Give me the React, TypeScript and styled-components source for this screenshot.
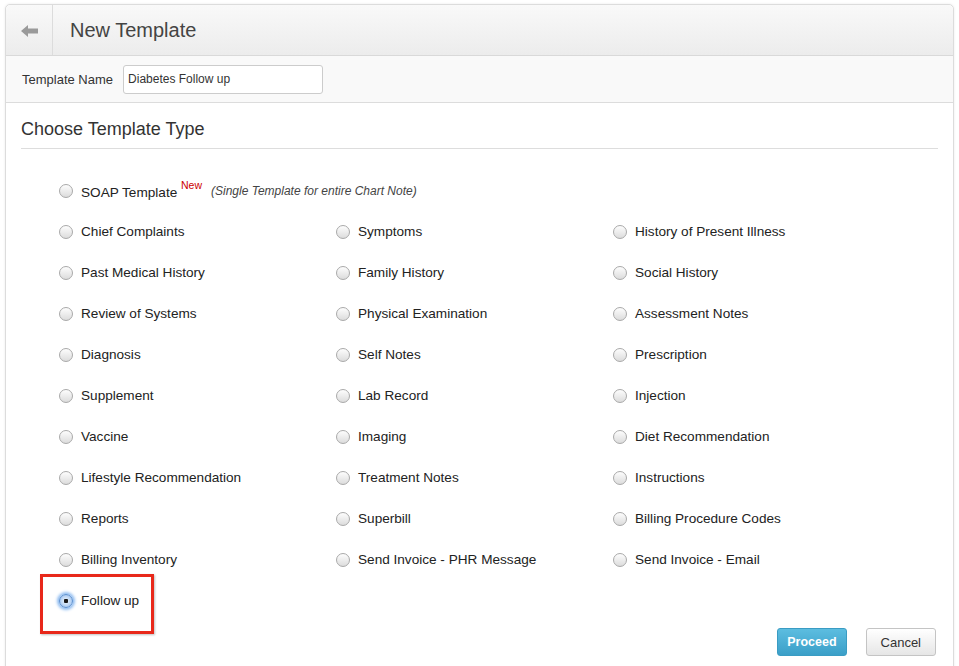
import styled, { createGlobalStyle, css } from "styled-components";

const GlobalStyle = createGlobalStyle`
  html, body {
    margin: 0;
    padding: 0;
    background: #fff;
    font-family: "Liberation Sans", Arial, sans-serif;
    color: #333;
  }
`;

const columns: string[][] = [
  ["Chief Complaints", "Symptoms", "History of Present Illness"],
  ["Past Medical History", "Family History", "Social History"],
  ["Review of Systems", "Physical Examination", "Assessment Notes"],
  ["Diagnosis", "Self Notes", "Prescription"],
  ["Supplement", "Lab Record", "Injection"],
  ["Vaccine", "Imaging", "Diet Recommendation"],
  ["Lifestyle Recommendation", "Treatment Notes", "Instructions"],
  ["Reports", "Superbill", "Billing Procedure Codes"],
  ["Billing Inventory", "Send Invoice - PHR Message", "Send Invoice - Email"],
];

const BackArrow = () => (
  <svg width="18" height="12" viewBox="0 0 18 12">
    <polygon points="0,6 7,0 7,3.5 17,3.5 17,8.5 7,8.5 7,12" fill="#9a9a9a" />
  </svg>
);

const App = () => {
  return (
    <>
      <GlobalStyle />
      <Panel>
        <Header>
          <BackButton>
            <BackArrow />
          </BackButton>
          <Title>New Template</Title>
        </Header>

        <NameRow>
          <Label>Template Name</Label>
          <NameInput defaultValue="Diabetes Follow up" />
        </NameRow>

        <Body>
          <SectionTitle>Choose Template Type</SectionTitle>

          <TypeGrid>
            <Option $wide>
              <Radio />
              <span>
                SOAP Template <NewTag>New</NewTag>
              </span>
              <Note>(Single Template for entire Chart Note)</Note>
            </Option>
            {columns.flat().map((name) => (
              <Option key={name}>
                <Radio />
                <span>{name}</span>
              </Option>
            ))}
            <Option>
              <Radio $checked />
              <span>Follow up</span>
              <Highlight />
            </Option>
          </TypeGrid>

          <Actions>
            <Button $primary>Proceed</Button>
            <Button>Cancel</Button>
          </Actions>
        </Body>
      </Panel>
    </>
  );
};

const Panel = styled.div`
  margin: 4px 0 0 5px;
  width: 947px;
  height: 680px;
  border: 1px solid #dcdcdc;
  border-radius: 5px 5px 0 0;
  box-shadow: 0 0 3px rgba(0, 0, 0, 0.08);
  background: #fff;
`;

const Header = styled.div`
  height: 50px;
  display: flex;
  align-items: stretch;
  background: linear-gradient(#f9f9f9, #ececec);
  border-bottom: 1px solid #d9d9d9;
  border-radius: 5px 5px 0 0;
`;

const BackButton = styled.div`
  box-sizing: border-box;
  width: 47px;
  display: flex;
  align-items: center;
  justify-content: center;
  border-right: 1px solid #dcdcdc;
  padding: 2px 0 0 2px;
`;

const Title = styled.h1`
  margin: 0;
  padding-left: 17px;
  display: flex;
  align-items: center;
  font-size: 20px;
  font-weight: normal;
  color: #444;
`;

const NameRow = styled.div`
  height: 46px;
  display: flex;
  align-items: center;
  gap: 10px;
  padding: 0 16px;
  background: #f9f9f9;
  border-bottom: 1px solid #dcdcdc;
`;

const Label = styled.label`
  font-size: 13px;
  color: #333;
`;

const NameInput = styled.input`
  box-sizing: border-box;
  width: 200px;
  height: 29px;
  padding: 0 4px;
  border: 1px solid #ccc;
  border-radius: 3px;
  background: #fff;
  font-family: "Liberation Sans", Arial, sans-serif;
  font-size: 12px;
  color: #333;
  outline: none;
`;

const Body = styled.div`
  padding: 0 15px;
`;

const SectionTitle = styled.h2`
  margin: 0;
  padding: 15px 0 8px;
  line-height: 22px;
  font-size: 18px;
  font-weight: normal;
  color: #333;
  border-bottom: 1px solid #ddd;
`;

const TypeGrid = styled.div`
  display: grid;
  grid-template-columns: repeat(3, 277px);
  grid-auto-rows: 41px;
  padding: 21px 0 0 38px;
`;

const Option = styled.label<{ $wide?: boolean }>`
  position: relative;
  display: flex;
  align-items: center;
  gap: 8px;
  font-size: 13.6px;
  color: #222;
  ${({ $wide }) =>
    $wide &&
    css`
      grid-column: 1 / -1;
    `}
`;

const Radio = styled.span<{ $checked?: boolean }>`
  box-sizing: border-box;
  width: 14px;
  height: 14px;
  border-radius: 50%;
  flex-shrink: 0;
  border: 1px solid #a9a9a9;
  background: linear-gradient(#fdfdfd, #dcdcdc);
  ${({ $checked }) =>
    $checked &&
    css`
      border-color: #5a8fd0;
      background: radial-gradient(circle, #1a1a1a 0 2px, #d6e7fa 2.5px, #8fb7ea 100%);
      box-shadow: 0 0 3px 2px #8dbbf0;
    `}
`;

const NewTag = styled.sup`
  color: #cc0000;
  font-size: 10.5px;
  position: relative;
  top: -2px;
`;

const Note = styled.em`
  margin-left: 1px;
  font-size: 12px;
  color: #444;
`;

const Highlight = styled.span`
  position: absolute;
  left: -19px;
  top: -6px;
  width: 108px;
  height: 54px;
  border: 3px solid #e8281a;
  box-shadow: 1px 1px 2px rgba(0, 0, 0, 0.25);
  pointer-events: none;
`;

const Actions = styled.div`
  display: flex;
  justify-content: flex-end;
  gap: 19px;
  padding: 7px 2px 0 0;
`;

const Button = styled.button<{ $primary?: boolean }>`
  height: 28px;
  padding: 0 14px;
  border-radius: 3px;
  font-family: "Liberation Sans", Arial, sans-serif;
  font-size: 13px;
  cursor: pointer;
  border: 1px solid #c4c4c4;
  background: linear-gradient(#ffffff, #e6e6e6);
  color: #333;
  ${({ $primary }) =>
    $primary &&
    css`
      padding: 0 9px;
      font-size: 12.5px;
      border-color: #3a9cc3;
      background: linear-gradient(#5cbde0, #3b9fc8);
      color: #fff;
      font-weight: bold;
    `}
`;

export default App;
